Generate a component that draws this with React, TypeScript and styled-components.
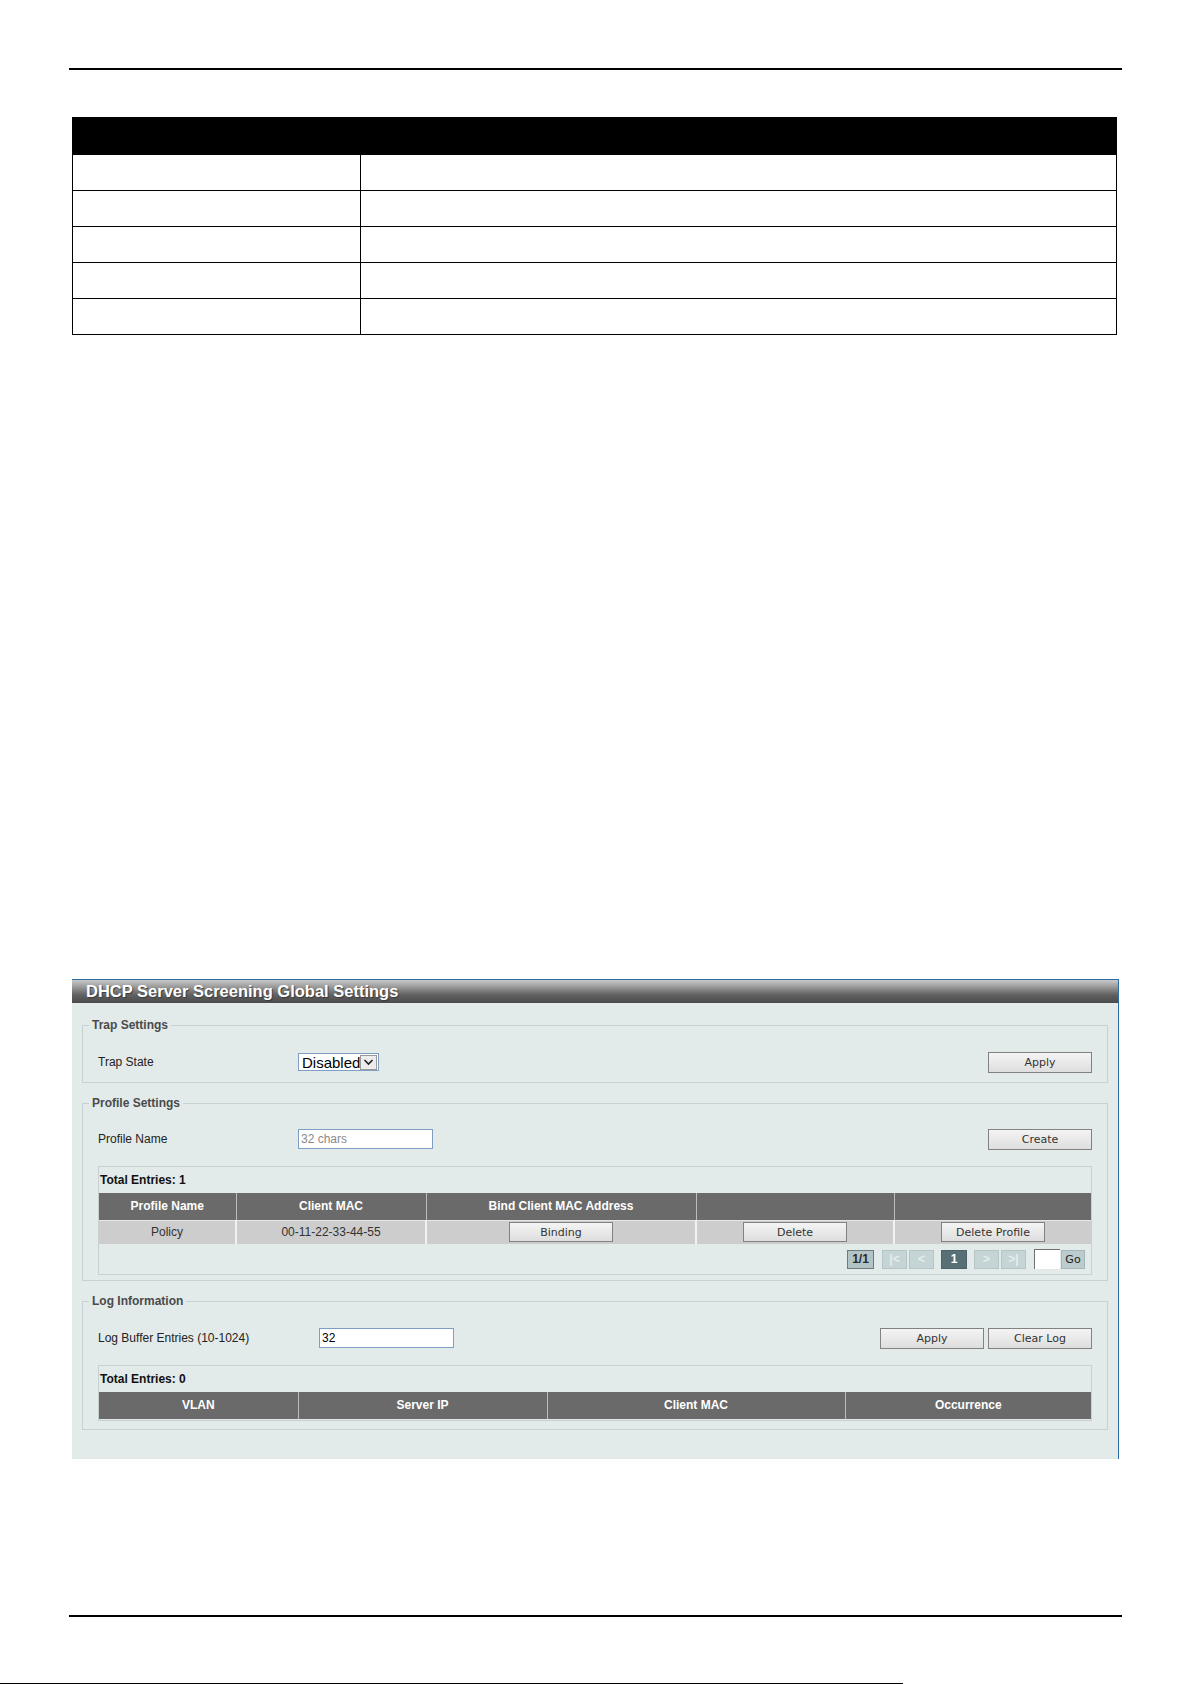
import React from 'react'
import styled, { createGlobalStyle } from 'styled-components'

const GlobalStyle = createGlobalStyle`
  html, body {
    margin: 0;
    padding: 0;
    background: #fff;
  }
  * {
    box-sizing: border-box;
  }
`

const Page = styled.div`
  width: 1192px;
  height: 1684px;
  display: flex;
  flex-direction: column;
  background: #fff;
  overflow: hidden;
  font-family: 'Liberation Sans', Arial, sans-serif;
`

const Rule = styled.div<{ $top: number }>`
  margin: ${(p) => p.$top}px 70px 0 69px;
  height: 2px;
  flex-shrink: 0;
  background: #000;
`

const FooterLine = styled.div`
  margin-top: 66px;
  width: 903px;
  height: 2px;
  flex-shrink: 0;
  background: #000;
`

/* parameter table of the manual page */
const SpecTable = styled.table`
  margin: 47px 0 0 72px;
  width: 1045px;
  border-collapse: collapse;
  flex-shrink: 0;
`

const SpecHead = styled.th`
  height: 37px;
  padding: 0;
  background: #000;
  border: 1px solid #000;
`

const SpecCell = styled.td<{ $w?: number }>`
  height: 36px;
  padding: 0;
  width: ${(p) => (p.$w ? `${p.$w}px` : 'auto')};
  border: 1px solid #000;
`

/* web UI window */
const Panel = styled.div`
  margin: 644px 0 0 72px;
  width: 1047px;
  flex-shrink: 0;
  border-top: 1px solid #2b6ba5;
  border-right: 1px solid #2b6ba5;
  background: #e2eaea;
`

const TitleBar = styled.div`
  height: 23px;
  padding-left: 14px;
  display: flex;
  align-items: center;
  background: linear-gradient(#c9c9c9 0%, #9a9a9a 30%, #606060 65%, #4b4b4b 100%);
  color: #fff;
  font-size: 16.5px;
  font-weight: bold;
  text-shadow: 1px 1px 1px #3a3a3a;
`

const PanelBody = styled.div`
  padding: 15px 10px 29px 10px;
  display: flex;
  flex-direction: column;
  gap: 13px;
`

const Group = styled.fieldset<{ $pt: number; $pb: number }>`
  margin: 0;
  padding: ${(p) => p.$pt}px 15px ${(p) => p.$pb}px 15px;
  border: 1px solid #c6d1d2;
  min-width: 0;
`

const Legend = styled.legend`
  margin-left: -9px;
  padding: 0 3px;
  font-size: 12px;
  line-height: 14px;
  font-weight: bold;
  color: #4a4a4a;
`

const FormRow = styled.div`
  height: 22px;
  display: flex;
  align-items: center;
`

const Label = styled.div<{ $w: number }>`
  width: ${(p) => p.$w}px;
  font-size: 12px;
  color: #222;
`

const Actions = styled.div`
  margin-left: auto;
  display: flex;
  gap: 4px;
`

const Button = styled.button<{ $w?: number }>`
  width: ${(p) => p.$w ?? 104}px;
  height: 21px;
  padding: 0;
  border: 1px solid #828282;
  background: linear-gradient(#f4f4f4, #dedede);
  font-family: 'DejaVu Sans', Verdana, sans-serif;
  font-size: 11px;
  color: #333;
`

const TextInput = styled.input`
  width: 135px;
  height: 20px;
  padding: 0 2px;
  border: 1px solid #7e9fc3;
  background: #fff;
  font-family: 'Liberation Sans', Arial, sans-serif;
  font-size: 12px;
  color: #000;
  outline: none;
  &::placeholder {
    color: #8a8a8a;
  }
`

const SelectBox = styled.div`
  width: 81px;
  height: 18px;
  display: flex;
  align-items: center;
  justify-content: space-between;
  padding: 0 1px 0 3px;
  border: 1px solid #7e9fc3;
  background: #fff;
  font-size: 15px;
  color: #000;
`

const SelectArrow = styled.div`
  width: 19px;
  height: 15px;
  display: flex;
  align-items: center;
  justify-content: center;
  border: 1px solid #9a9a9a;
  background: #ececec;
`

const EntryBox = styled.div`
  margin-top: 16px;
  border: 1px solid #c6d1d2;
`

const EntryCount = styled.div`
  height: 26px;
  padding-left: 1px;
  display: flex;
  align-items: center;
  font-size: 12px;
  font-weight: bold;
  color: #111;
`

const Grid = styled.table`
  width: 100%;
  border-collapse: collapse;
  table-layout: fixed;
`

const HeadCell = styled.th<{ $w?: number }>`
  width: ${(p) => (p.$w ? `${p.$w}px` : 'auto')};
  height: 27px;
  padding: 0;
  background: #6a6a6a;
  border-right: 1px solid #bcbcbc;
  border-bottom: 1px solid #e6e6e6;
  color: #fff;
  font-size: 12px;
  font-weight: bold;
  text-align: center;
  &:last-child {
    border-right: none;
  }
`

const DataCell = styled.td`
  height: 24px;
  padding: 0;
  background: #cdcdcd;
  border-right: 2px solid #f2f2f2;
  font-size: 12px;
  color: #333;
  text-align: center;
  vertical-align: middle;
  &:last-child {
    border-right: none;
  }
  & > button {
    height: 20px;
    display: block;
    margin: 0 auto;
  }
`

const Pager = styled.div`
  height: 30px;
  padding-right: 6px;
  display: flex;
  align-items: center;
  justify-content: flex-end;
`

type PageKind = 'count' | 'off' | 'current'

const PageBox = styled.div<{ $kind: PageKind; $gap?: number }>`
  width: ${(p) => (p.$kind === 'count' ? 27 : p.$kind === 'current' ? 26 : 25)}px;
  height: 19px;
  margin-left: ${(p) => p.$gap ?? 0}px;
  display: flex;
  align-items: center;
  justify-content: center;
  font-size: 12px;
  font-weight: bold;
  border: 1px solid
    ${(p) => (p.$kind === 'count' ? '#6d7b7c' : p.$kind === 'current' ? '#4d6367' : '#b5c5c6')};
  background: ${(p) => (p.$kind === 'count' ? '#b3c4c6' : p.$kind === 'current' ? '#587075' : '#c5d4d5')};
  color: ${(p) => (p.$kind === 'count' ? '#2a2a2a' : p.$kind === 'current' ? '#fff' : '#e6eeee')};
`

const PageInput = styled.div`
  width: 26px;
  height: 20px;
  margin-left: 8px;
  border-top: 1px solid #6f6f6f;
  border-left: 1px solid #6f6f6f;
  background: #fff;
`

const GoButton = styled.div`
  width: 24px;
  height: 19px;
  margin-left: 1px;
  display: flex;
  align-items: center;
  justify-content: center;
  border: 1px solid #a7b7b9;
  background: #bccbcd;
  font-family: 'DejaVu Sans', Verdana, sans-serif;
  font-size: 11px;
  color: #222;
`

const ChevronDown = () => (
  <svg width="11" height="8" viewBox="0 0 11 8">
    <polyline points="1.5,2 5.5,6 9.5,2" fill="none" stroke="#222" strokeWidth="1.6" />
  </svg>
)

const specRows = [0, 1, 2, 3, 4]

const App = () => {
  return (
    <Page>
      <GlobalStyle />
      <Rule $top={68} />

      <SpecTable>
        <thead>
          <tr>
            <SpecHead colSpan={2} />
          </tr>
        </thead>
        <tbody>
          {specRows.map((r) => (
            <tr key={r}>
              <SpecCell $w={288} />
              <SpecCell />
            </tr>
          ))}
        </tbody>
      </SpecTable>

      <Panel>
        <TitleBar>DHCP Server Screening Global Settings</TitleBar>
        <PanelBody>
          <Group $pt={19} $pb={9}>
            <Legend>Trap Settings</Legend>
            <FormRow>
              <Label $w={200}>Trap State</Label>
              <SelectBox>
                <span>Disabled</span>
                <SelectArrow>
                  <ChevronDown />
                </SelectArrow>
              </SelectBox>
              <Actions>
                <Button>Apply</Button>
              </Actions>
            </FormRow>
          </Group>

          <Group $pt={18} $pb={5}>
            <Legend>Profile Settings</Legend>
            <FormRow>
              <Label $w={200}>Profile Name</Label>
              <TextInput placeholder="32 chars" readOnly />
              <Actions>
                <Button>Create</Button>
              </Actions>
            </FormRow>
            <EntryBox>
              <EntryCount>Total Entries: 1</EntryCount>
              <Grid>
                <thead>
                  <tr>
                    <HeadCell $w={137}>Profile Name</HeadCell>
                    <HeadCell $w={190}>Client MAC</HeadCell>
                    <HeadCell $w={270}>Bind Client MAC Address</HeadCell>
                    <HeadCell $w={198} />
                    <HeadCell />
                  </tr>
                </thead>
                <tbody>
                  <tr>
                    <DataCell>Policy</DataCell>
                    <DataCell>00-11-22-33-44-55</DataCell>
                    <DataCell>
                      <Button>Binding</Button>
                    </DataCell>
                    <DataCell>
                      <Button>Delete</Button>
                    </DataCell>
                    <DataCell>
                      <Button>Delete Profile</Button>
                    </DataCell>
                  </tr>
                </tbody>
              </Grid>
              <Pager>
                <PageBox $kind="count">1/1</PageBox>
                <PageBox $kind="off" $gap={8}>|&lt;</PageBox>
                <PageBox $kind="off" $gap={2}>&lt;</PageBox>
                <PageBox $kind="current" $gap={7}>1</PageBox>
                <PageBox $kind="off" $gap={7}>&gt;</PageBox>
                <PageBox $kind="off" $gap={2}>&gt;|</PageBox>
                <PageInput />
                <GoButton>Go</GoButton>
              </Pager>
            </EntryBox>
          </Group>

          <Group $pt={19} $pb={8}>
            <Legend>Log Information</Legend>
            <FormRow>
              <Label $w={221}>Log Buffer Entries (10-1024)</Label>
              <TextInput defaultValue="32" />
              <Actions>
                <Button>Apply</Button>
                <Button>Clear Log</Button>
              </Actions>
            </FormRow>
            <EntryBox>
              <EntryCount>Total Entries: 0</EntryCount>
              <Grid>
                <thead>
                  <tr>
                    <HeadCell $w={199}>VLAN</HeadCell>
                    <HeadCell $w={249}>Server IP</HeadCell>
                    <HeadCell $w={298}>Client MAC</HeadCell>
                    <HeadCell>Occurrence</HeadCell>
                  </tr>
                </thead>
              </Grid>
            </EntryBox>
          </Group>
        </PanelBody>
      </Panel>

      <Rule $top={156} />
      <FooterLine />
    </Page>
  )
}

export default App
